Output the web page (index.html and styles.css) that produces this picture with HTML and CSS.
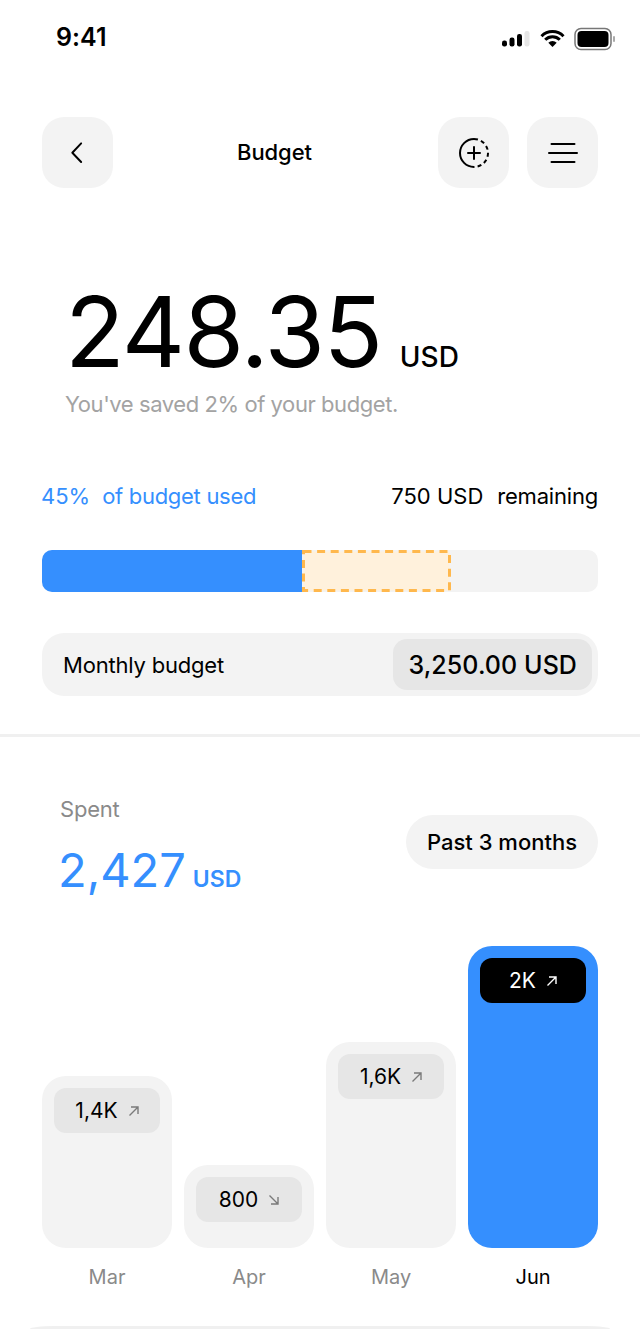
FILE: index.html
```html
<!DOCTYPE html>
<html lang="en">
<head>
<meta charset="utf-8">
<title>Budget</title>
<link rel="stylesheet" href="styles.css">
</head>
<body>
<main class="screen">
  <div class="status">
    <span class="time">9:41</span>
    <div class="status-icons">
      <svg class="signal" width="28" height="16" viewBox="0 0 28 16"><rect x="0" y="9.5" width="5" height="6" rx="2.2" fill="#000"/><rect x="7.5" y="6.5" width="5" height="9" rx="2.2" fill="#000"/><rect x="15" y="3" width="5" height="12.5" rx="2.2" fill="#000"/><rect x="22.5" y="0" width="5" height="15.5" rx="2.2" fill="#e6e6e6"/></svg>
      <svg width="25" height="18" viewBox="0 0 25 18"><path d="M1.5 6.2a15.5 15.5 0 0 1 22 0M5.2 9.8a10.3 10.3 0 0 1 14.6 0" fill="none" stroke="#000" stroke-width="3"/><path d="M8.3 12.8a6 6 0 0 1 8.4 0L12.5 17z" fill="#000"/></svg>
      <svg width="42" height="24" viewBox="0 0 42 24"><rect x="1" y="1.5" width="36" height="21" rx="6" fill="none" stroke="#777" stroke-width="1.5"/><rect x="3.5" y="4" width="31" height="16" rx="4" fill="#000"/><rect x="39" y="9" width="2" height="6" rx="1" fill="#aaa"/></svg>
    </div>
  </div>

  <header class="topbar">
    <button class="icon-btn" aria-label="Back">
      <svg width="28" height="28" viewBox="0 0 28 28"><path d="M18 4.5 9 14l9 9.5" fill="none" stroke="#000" stroke-width="2" stroke-linecap="round" stroke-linejoin="round" transform="translate(-.5 0) scale(.98)"/></svg>
    </button>
    <h1 class="title">Budget</h1>
    <button class="icon-btn" aria-label="Add">
      <svg width="32" height="32" viewBox="0 0 32 32"><path d="M16 2a14 14 0 0 0 0 28" fill="none" stroke="#000" stroke-width="2"/><path d="M16 2a14 14 0 0 1 0 28" fill="none" stroke="#000" stroke-width="2" stroke-dasharray="4 3.2"/><path d="M16 10v12M10 16h12" stroke="#000" stroke-width="2" stroke-linecap="round"/></svg>
    </button>
    <button class="icon-btn" aria-label="Menu">
      <svg width="30" height="24" viewBox="0 0 30 24"><path d="M3.5 3h23M1 12h28M3.5 21h23" stroke="#000" stroke-width="2" stroke-linecap="round"/></svg>
    </button>
  </header>

  <section class="balance">
    <div class="amount"><span class="amount-value">248.35</span><span class="amount-unit">USD</span></div>
    <p class="saved">You've saved 2% of your budget.</p>
  </section>

  <section class="usage">
    <div class="usage-labels">
      <span class="used"><span class="used-pct">45%</span><span class="used-text">of budget used</span></span>
      <span class="remain"><span class="remain-num">750 USD</span><span class="remain-text">remaining</span></span>
    </div>
    <div class="progress">
      <div class="progress-fill"></div>
      <div class="progress-pending">
        <svg class="dash" width="149" height="42" viewBox="0 0 149 42"><rect x="1.5" y="1.5" width="146" height="39" fill="#fff1dc" stroke="#ffb84d" stroke-width="3" stroke-dasharray="8 5.6"/></svg>
      </div>
    </div>
    <div class="monthly">
      <span class="monthly-label">Monthly budget</span>
      <span class="monthly-value">3,250.00 USD</span>
    </div>
  </section>

  <section class="spent">
    <div class="spent-head">
      <div class="spent-info">
        <span class="spent-label">Spent</span>
        <div class="spent-amount"><span class="spent-value">2,427</span><span class="spent-unit">USD</span></div>
      </div>
      <button class="period">Past 3 months</button>
    </div>
    <div class="chart">
      <div class="col">
        <div class="bar bar-mar"><div class="chip">1,4K <svg class="arrow" width="12" height="12" viewBox="0 0 12 12"><path d="M1.5 10.5 10 2M3 2h7v7" fill="none" stroke="#7a7a7a" stroke-width="1.4"/></svg></div></div>
        <span class="month">Mar</span>
      </div>
      <div class="col">
        <div class="bar bar-apr"><div class="chip">800 <svg class="arrow" width="12" height="12" viewBox="0 0 12 12"><path d="M1.5 1.5 10 10M3 10h7V3" fill="none" stroke="#7a7a7a" stroke-width="1.4"/></svg></div></div>
        <span class="month">Apr</span>
      </div>
      <div class="col">
        <div class="bar bar-may"><div class="chip">1,6K <svg class="arrow" width="12" height="12" viewBox="0 0 12 12"><path d="M1.5 10.5 10 2M3 2h7v7" fill="none" stroke="#7a7a7a" stroke-width="1.4"/></svg></div></div>
        <span class="month">May</span>
      </div>
      <div class="col">
        <div class="bar bar-jun"><div class="chip chip-dark">2K <svg class="arrow" width="12" height="12" viewBox="0 0 12 12"><path d="M1.5 10.5 10 2M3 2h7v7" fill="none" stroke="#fff" stroke-width="1.4"/></svg></div></div>
        <span class="month month-active">Jun</span>
      </div>
    </div>
  </section>
  <div class="next-edge"></div>
</main>
</body>
</html>
```

FILE: styles.css
```css
* { box-sizing: border-box; margin: 0; padding: 0; }
html, body { background: #fff; }
body { font-family: Inter, "Liberation Sans", sans-serif; color: #000; }
button { font: inherit; color: inherit; border: 0; }

.screen { width: 640px; height: 1329px; overflow: hidden; }

.status { height: 75px; padding: 21px 24px 0 56px; display: flex; justify-content: space-between; align-items: flex-start; }
.time { font-size: 25px; line-height: 32px; font-weight: 600; letter-spacing: .05px; }
.status-icons { display: flex; align-items: center; gap: 9px; padding-top: 6px; }
.signal { margin-right: 1px; }

.topbar { margin-top: 42px; padding: 0 42px; display: flex; align-items: center; gap: 18px; }
.icon-btn { width: 71px; height: 71px; border-radius: 22px; background: #f3f3f3; display: flex; align-items: center; justify-content: center; flex: none; }
.title { flex: 1; font-size: 22px; line-height: 28px; font-weight: 500; text-align: center; letter-spacing: -.05px; margin: -2px 2px 0 0; }

.balance { padding: 85px 65px 0; height: 241px; }
.amount { display: flex; align-items: baseline; gap: 18px; }
.amount-value { font-size: 98px; line-height: 118px; font-weight: 400; letter-spacing: -1.5px; }
.amount-unit { font-size: 28px; font-weight: 500; letter-spacing: .1px; }
.saved { font-size: 22px; line-height: 28px; color: #a3a3a3; letter-spacing: -.43px; margin-top: -1px; }

.usage { padding: 53px 42px 0; border-bottom: 3px solid #f0f0f0; height: 308px; }
.usage-labels { display: flex; justify-content: space-between; font-size: 22px; line-height: 28px; }
.used { color: #358ffe; display: flex; gap: 12px; margin-left: -1px; }
.used-text { letter-spacing: -.3px; }
.remain { display: flex; gap: 14px; }
.remain-text { letter-spacing: -.2px; }
.progress { margin-top: 40px; height: 42px; border-radius: 10px; background: #f3f3f3; display: flex; overflow: hidden; }
.progress-fill { width: 260px; background: #358ffe; }
.progress-pending { width: 149px; height: 42px; }
.dash { display: block; }
.monthly { margin-top: 41px; height: 63px; border-radius: 22px; background: #f3f3f3; padding: 6px 6px 6px 21px; display: flex; align-items: center; justify-content: space-between; font-size: 22px; }
.monthly-label { letter-spacing: -.2px; }
.monthly-value { height: 51px; padding: 0 15px; border-radius: 14px; background: #e6e6e6; display: flex; align-items: center; font-size: 25px; font-weight: 500; letter-spacing: .08px; }

.spent { padding: 0 42px; height: 589px; }
.spent-head { display: flex; justify-content: space-between; align-items: flex-start; padding: 58px 0 0 18px; }
.spent-label { display: block; font-size: 22px; line-height: 28px; color: #8a8a8a; letter-spacing: -.2px; }
.spent-amount { display: flex; align-items: baseline; gap: 7px; margin: 17px 0 0 -2px; }
.spent-value { font-size: 47px; line-height: 60px; color: #358ffe; }
.spent-unit { font-size: 23px; font-weight: 600; color: #358ffe; }
.period { height: 54px; padding: 0 21px; border-radius: 27px; background: #f3f3f3; font-size: 22px; font-weight: 500; margin-top: 20px; }

.chart { display: flex; gap: 12px; align-items: flex-end; margin-top: 46px; }
.col { width: 130px; display: flex; flex-direction: column; }
.bar { background: #f3f3f3; border-radius: 24px; padding: 12px; }
.bar-mar { height: 172px; }
.bar-apr { height: 83px; }
.bar-may { height: 206px; }
.bar-jun { height: 302px; background: #358ffe; }
.chip { height: 45px; padding-left: 1px; border-radius: 12px; background: #e6e6e6; font-size: 21px; font-weight: 400; display: flex; align-items: center; justify-content: center; gap: 10px; }
.chip-dark { background: #000; color: #fff; }
.arrow { flex: none; }
.month { text-align: center; font-size: 20px; line-height: 28px; color: #8a8a8a; margin-top: 15px; }
.month-active { color: #000; }

.next-edge { height: 3px; margin: 0 30px; background: #f0f0f0; border-radius: 24px 24px 0 0 / 3px 3px 0 0; }
```
